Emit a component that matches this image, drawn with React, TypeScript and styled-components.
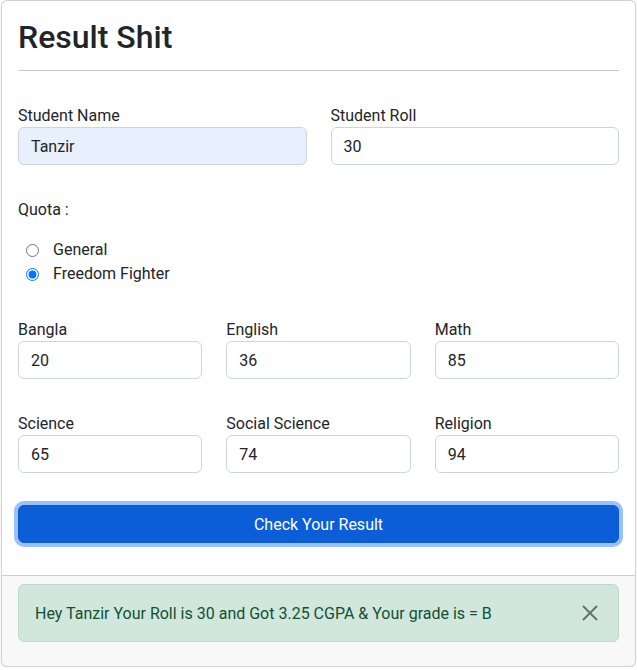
import React from "react";
import styled, { createGlobalStyle } from "styled-components";

const Global = createGlobalStyle`
  * { box-sizing: border-box; }
  body {
    margin: 0;
    background: #fff;
    font-family: Roboto, "Noto Sans", sans-serif;
    font-size: 16px;
    line-height: 1.5;
    color: #212529;
  }
`;

const Card = styled.div`
  margin: 0 1px;
  border: 1px solid rgba(0, 0, 0, 0.175);
  border-radius: 6px;
  background: #fff;
  box-shadow: 0 2px 4px rgba(0, 0, 0, 0.075);
  overflow: hidden;
`;

const CardBody = styled.div`
  padding: 16px 16px 32px;
  display: flex;
  flex-direction: column;
`;

const Title = styled.h2`
  margin: 0;
  padding-top: 1px;
  margin-bottom: -1px;
  font-size: 32px;
  font-weight: 500;
  line-height: 1.2;
`;

const Rule = styled.hr`
  margin: 15px 0 32px;
  border: 0;
  border-top: 1px solid #c9cacb;
  height: 0;
`;

const Grid = styled.div<{ $cols: number; $mb?: number }>`
  display: grid;
  grid-template-columns: repeat(${(p) => p.$cols}, 1fr);
  column-gap: 24px;
  margin-bottom: ${(p) => p.$mb ?? 32}px;
`;

const Field = styled.div`
  display: flex;
  flex-direction: column;
`;

const Label = styled.label`
  display: block;
  line-height: 24px;
  padding-top: 1px;
  margin-bottom: -1px;
`;

const Input = styled.input<{ $filled?: boolean }>`
  height: 38px;
  width: 100%;
  padding: 6px 12px;
  font: inherit;
  color: #212529;
  background: ${(p) => (p.$filled ? "#e8f0fe" : "#fff")};
  border: 1px solid #ced4da;
  border-radius: 6px;
  outline: none;
`;

const Quota = styled.div`
  display: flex;
  flex-direction: column;
  margin-bottom: 31px;
`;

const QuotaTitle = styled.div`
  line-height: 24px;
  padding-top: 1px;
  margin-bottom: 16px;
`;

const RadioRow = styled.label`
  display: flex;
  align-items: center;
  height: 24px;
`;

const Radio = styled.input`
  width: 13px;
  height: 13px;
  margin: 0 14px 0 8px;
`;

const Button = styled.button`
  height: 38px;
  width: 100%;
  font: inherit;
  padding-top: 2px;
  color: #fff;
  background: #0b5ed7;
  border: 1px solid #0a58ca;
  border-radius: 6px;
  box-shadow: 0 0 0 4px rgba(49, 132, 253, 0.5);
`;

const Footer = styled.div`
  padding: 8px 16px;
  background: rgba(33, 37, 41, 0.03);
  border-top: 1px solid rgba(0, 0, 0, 0.175);
`;

const Alert = styled.div`
  position: relative;
  margin-bottom: 16px;
  padding: 17px 48px 15px 16px;
  color: #0f5132;
  background: #d1e7dd;
  border: 1px solid #badbcc;
  border-radius: 6px;
  line-height: 24px;
`;

const Close = styled.button`
  position: absolute;
  top: 0;
  right: 4px;
  width: 48px;
  height: 56px;
  padding: 0;
  background: transparent;
  border: 0;
  display: flex;
  align-items: center;
  justify-content: center;
  opacity: 0.5;
`;

const marks: [string, string][] = [
  ["Bangla", "20"],
  ["English", "36"],
  ["Math", "85"],
];
const marks2: [string, string][] = [
  ["Science", "65"],
  ["Social Science", "74"],
  ["Religion", "94"],
];

export default function App() {
  return (
    <>
      <Global />
      <Card>
        <CardBody>
          <Title>Result Shit</Title>
          <Rule />
          <Grid $cols={2}>
            <Field>
              <Label>Student Name</Label>
              <Input $filled defaultValue="Tanzir" />
            </Field>
            <Field>
              <Label>Student Roll</Label>
              <Input defaultValue="30" />
            </Field>
          </Grid>
          <Quota>
            <QuotaTitle>Quota :</QuotaTitle>
            <RadioRow>
              <Radio type="radio" name="quota" />
              General
            </RadioRow>
            <RadioRow>
              <Radio type="radio" name="quota" defaultChecked />
              Freedom Fighter
            </RadioRow>
          </Quota>
          <Grid $cols={3}>
            {marks.map(([l, v]) => (
              <Field key={l}>
                <Label>{l}</Label>
                <Input defaultValue={v} />
              </Field>
            ))}
          </Grid>
          <Grid $cols={3}>
            {marks2.map(([l, v]) => (
              <Field key={l}>
                <Label>{l}</Label>
                <Input defaultValue={v} />
              </Field>
            ))}
          </Grid>
          <Button>Check Your Result</Button>
        </CardBody>
        <Footer>
          <Alert>
            Hey Tanzir Your Roll is 30 and Got 3.25 CGPA &amp; Your grade is = B
            <Close aria-label="Close">
              <svg width="16" height="16" viewBox="0 0 16 16">
                <path d="M1 1L15 15M15 1L1 15" stroke="#000" strokeWidth="2" />
              </svg>
            </Close>
          </Alert>
        </Footer>
      </Card>
    </>
  );
}
